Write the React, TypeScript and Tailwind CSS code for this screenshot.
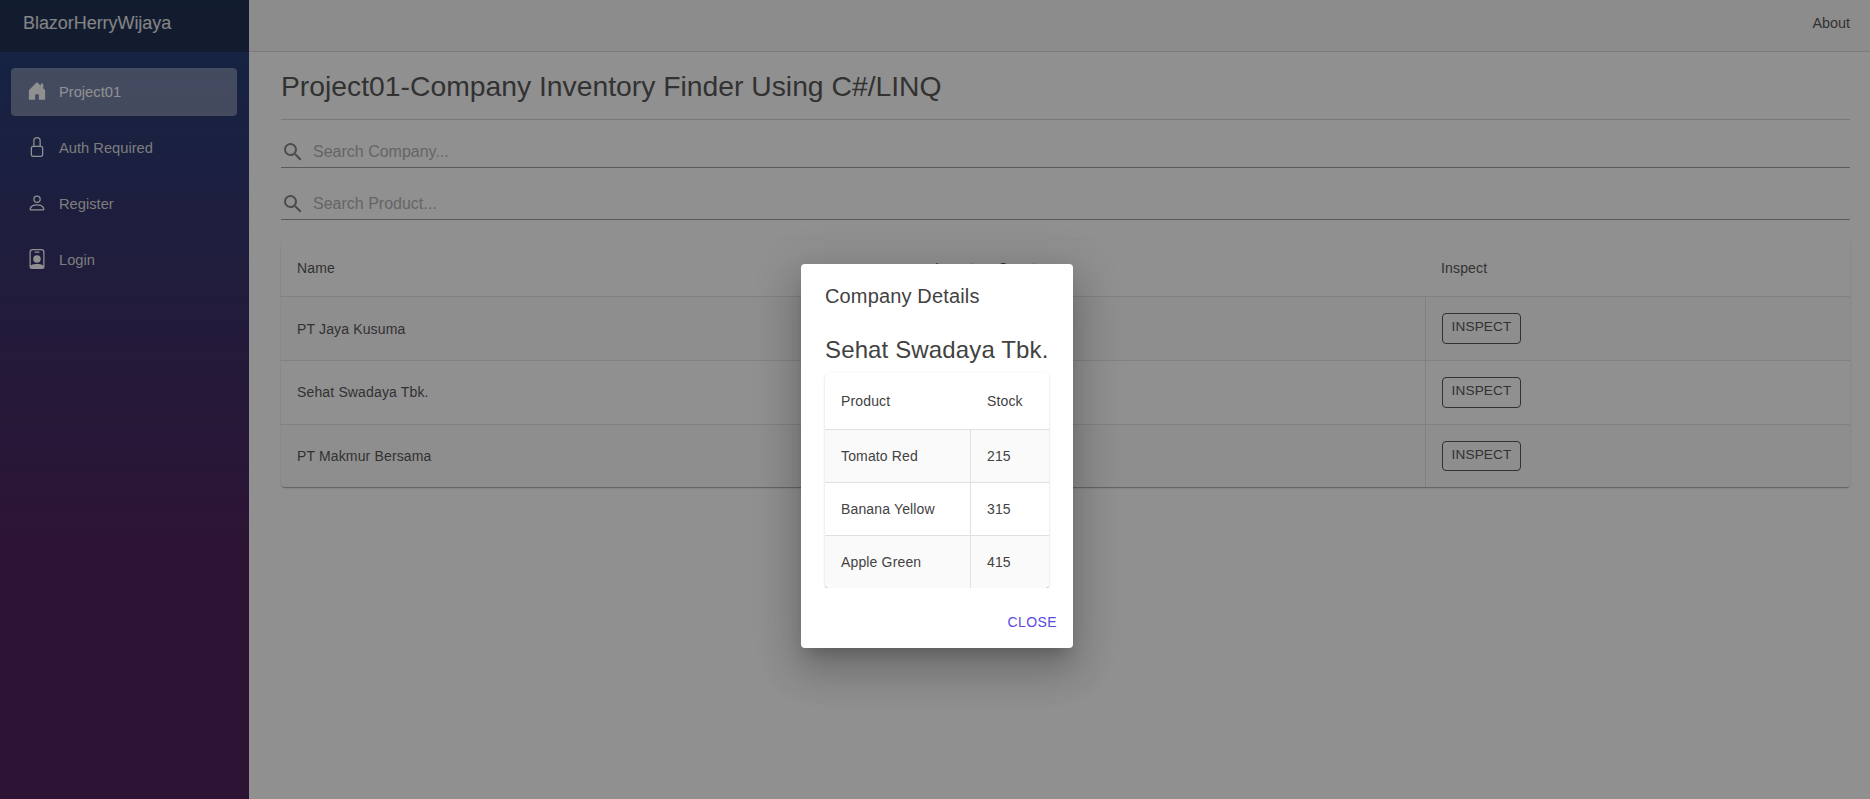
import { BsHouseDoorFill, BsLock, BsPerson, BsPersonBadge } from "react-icons/bs";
import { MdSearch } from "react-icons/md";

const nav = [
  { label: "Project01", Icon: BsHouseDoorFill, active: true },
  { label: "Auth Required", Icon: BsLock, active: false },
  { label: "Register", Icon: BsPerson, active: false },
  { label: "Login", Icon: BsPersonBadge, active: false },
];

const companies = ["PT Jaya Kusuma", "Sehat Swadaya Tbk.", "PT Makmur Bersama"];

const products = [
  { name: "Tomato Red", stock: 215 },
  { name: "Banana Yellow", stock: 315 },
  { name: "Apple Green", stock: 415 },
];

function Sidebar() {
  return (
    <aside className="w-[249px] shrink-0 bg-[linear-gradient(180deg,#052767_0%,#3a0647_70%)]">
      <div className="flex h-[52px] items-center bg-black/40 pb-[6px] pl-[23px] text-[18px] tracking-[-0.05px] text-white/90">
        BlazorHerryWijaya
      </div>
      <nav className="flex flex-col gap-2 pt-4 pr-3 pl-[11px]">
        {nav.map(({ label, Icon, active }) => (
          <a
            key={label}
            className={
              active
                ? "flex h-12 items-center rounded bg-white/37 pl-4 text-white"
                : "flex h-12 items-center rounded pl-4 text-[#d7d7d7]"
            }
          >
            <Icon className="mr-3 mb-[2px] size-5 text-white" />
            <span className="text-[14.7px]">{label}</span>
          </a>
        ))}
      </nav>
    </aside>
  );
}

function SearchField({ placeholder }: { placeholder: string }) {
  return (
    <label className="flex h-8 items-center border-b border-[#949494]">
      <MdSearch className="mr-2 size-6 text-[#757575]" />
      <input
        className="min-w-0 flex-1 bg-transparent text-base text-[#424242] placeholder:text-[#a8a8a8]"
        placeholder={placeholder}
      />
    </label>
  );
}

function CompanyTable() {
  return (
    <div className="overflow-hidden rounded shadow-[0_2px_1px_-1px_rgba(0,0,0,.2),0_1px_1px_0_rgba(0,0,0,.14),0_1px_3px_0_rgba(0,0,0,.12)]">
      <table className="w-full table-fixed border-separate border-spacing-0 text-left text-[14px] tracking-[.15px]">
        <colgroup>
          <col className="w-[638px]" />
          <col className="w-[507px]" />
          <col />
        </colgroup>
        <thead>
          <tr className="h-[57px]">
            <th className="border-b border-[#e0e0e0] px-4 font-normal">Name</th>
            <th className="border-b border-[#e0e0e0] px-4 font-normal">Inventory Count</th>
            <th className="border-b border-[#e0e0e0] px-[15px] font-normal">Inspect</th>
          </tr>
        </thead>
        <tbody>
          {companies.map((name) => (
            <tr key={name} className="group h-16 odd:bg-black/2 last:h-[62px]">
              <td className="border-r border-b border-[#e0e0e0] px-4 group-first:pt-[2px] group-last:border-b-0">{name}</td>
              <td className="border-r border-b border-[#e0e0e0] px-4 group-last:border-b-0">3</td>
              <td className="border-b border-[#e0e0e0] px-4 group-last:border-b-0">
                <button className="flex h-[31px] w-[79px] items-center justify-center rounded border border-[#424242] pb-[2px] text-[13.6px] group-last:h-[30px]">
                  INSPECT
                </button>
              </td>
            </tr>
          ))}
        </tbody>
      </table>
    </div>
  );
}

function DetailsDialog() {
  return (
    <div
      role="dialog"
      className="flex h-96 w-[272px] flex-col rounded bg-white text-[#424242] shadow-[0_11px_15px_-7px_rgba(0,0,0,.2),0_24px_38px_3px_rgba(0,0,0,.14),0_9px_46px_8px_rgba(0,0,0,.12)]"
    >
      <h2 className="px-6 pt-4 text-[20px] leading-8 tracking-[.15px]">Company Details</h2>
      <div className="px-6 pt-[22px]">
        <h3 className="text-[24px] leading-8 tracking-[.14px] whitespace-nowrap">Sehat Swadaya Tbk.</h3>
      </div>
      <div className="h-[222px] shrink-0 overflow-hidden px-6 pt-[7px]">
        <div className="overflow-hidden rounded shadow-[0_2px_1px_-1px_rgba(0,0,0,.2),0_1px_1px_0_rgba(0,0,0,.14),0_1px_3px_0_rgba(0,0,0,.12)]">
          <table className="w-full table-fixed border-separate border-spacing-0 text-left text-[14px] tracking-[.15px]">
            <colgroup>
              <col className="w-[146px]" />
              <col />
            </colgroup>
            <thead>
              <tr className="h-[57px]">
                <th className="border-b border-[#e0e0e0] px-4 font-normal">Product</th>
                <th className="border-b border-[#e0e0e0] px-4 font-normal">Stock</th>
              </tr>
            </thead>
            <tbody>
              {products.map((p) => (
                <tr key={p.name} className="group h-[53px] odd:bg-black/2 last:h-[52px]">
                  <td className="border-r border-b border-[#e0e0e0] px-4 group-last:border-b-0">{p.name}</td>
                  <td className="border-b border-[#e0e0e0] px-4 group-last:border-b-0">{p.stock}</td>
                </tr>
              ))}
            </tbody>
          </table>
        </div>
      </div>
      <div className="flex flex-1 items-center justify-end pt-[9px] pr-4">
        <button className="text-[14px] tracking-[.4px] text-[#594ae2]">CLOSE</button>
      </div>
    </div>
  );
}

export default function App() {
  return (
    <div className="relative flex h-[799px] overflow-hidden bg-white font-['Liberation_Sans',Arial,sans-serif] text-[#424242]">
      <Sidebar />
      <main className="flex min-w-0 flex-1 flex-col">
        <header className="flex h-[52px] items-center justify-end border-b border-[#d6d5d5] bg-[#f7f7f7] pr-5 pb-1 text-[14.4px]">
          <a>About</a>
        </header>
        <div className="flex flex-col pr-5 pl-8">
          <h1 className="flex h-[68px] items-center border-b border-[#cfcfcf] pt-[1px] text-[28.3px]">
            Project01-Company Inventory Finder Using C#/LINQ
          </h1>
          <div className="flex flex-col gap-5 pt-4 pb-5">
            <SearchField placeholder="Search Company..." />
            <SearchField placeholder="Search Product..." />
          </div>
          <CompanyTable />
        </div>
      </main>
      <div className="absolute inset-0 flex items-start justify-center bg-[#212121]/50 pt-[264px] pl-1">
        <DetailsDialog />
      </div>
    </div>
  );
}
